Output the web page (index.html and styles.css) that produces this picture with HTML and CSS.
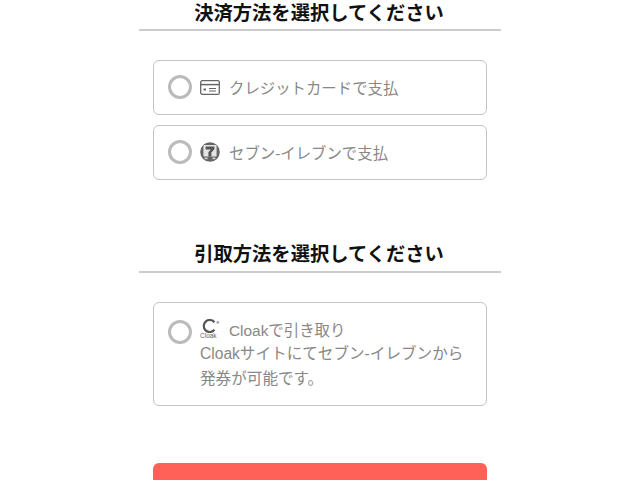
FILE: index.html
```html
<!DOCTYPE html>
<html lang="ja">
  <head>
    <meta charset="UTF-8" />
    <meta name="viewport" content="width=device-width, initial-scale=1.0" />
    <title>お支払い</title>
    <link rel="stylesheet" href="styles.css">
  </head>
  <body>
    <div class="container">
      <section class="section">
        <h2 class="section-title">決済方法を選択してください</h2>
        <div class="options">
          <label class="option">
            <span class="radio"></span>
            <svg class="icon" width="20" height="15" viewBox="0 0 20 15" fill="none" stroke="#666" stroke-width="1.3">
              <rect x="0.7" y="0.7" width="18.6" height="13.6" rx="1.6" />
              <path d="M1 4.6h18" stroke-width="1.5" />
              <path d="M3.5 9.5h2.5" stroke-width="2" />
              <path d="M9 8.5h7M9 11h7" stroke-width="1" />
            </svg>
            <span class="option-text">クレジットカードで支払</span>
          </label>
          <label class="option">
            <span class="radio"></span>
            <svg class="icon" width="20" height="20" viewBox="0 0 20 20">
              <circle cx="10" cy="10" r="9.8" fill="#666" />
              <rect x="3.4" y="3" width="13.2" height="11.6" rx="1" fill="#e4e4e4" />
              <path d="M5.6 4.6h8.8v2.6l-3 3.4v4H8.4v-4.4l2.4-2.8H5.6z" fill="#555" />
              <path d="M4.6 15.6h3v1.6h-3zM12.4 15.6h3v1.6h-3z" fill="#ccc" />
            </svg>
            <span class="option-text">セブン-イレブンで支払</span>
          </label>
        </div>
      </section>

      <section class="section section-pickup">
        <h2 class="section-title">引取方法を選択してください</h2>
        <div class="options">
          <label class="option option-top">
            <span class="radio radio-low"></span>
            <div class="option-body">
              <div class="cloak-row">
                <span class="cloak-logo">
                  <svg width="20" height="14" viewBox="0 0 20 14" fill="none">
                    <path d="M14.4 3.2A6 6 0 1 0 14.4 10.8" stroke="#555" stroke-width="2.2" />
                    <circle cx="17.8" cy="3.4" r="1.4" fill="#aaa" />
                  </svg>
                  <span class="cloak-small">Cloak</span>
                </span>
                <span class="option-text">Cloakで引き取り</span>
              </div>
              <p class="option-note">Cloakサイトにてセブン-イレブンから<br>発券が可能です。</p>
            </div>
          </label>
        </div>
      </section>

      <div class="btn-container">
        <button class="btn-next" type="submit"></button>
      </div>
    </div>
  </body>
</html>
```

FILE: styles.css
```css
html,
body {
  height: 100%;
  overflow: hidden;
}

body {
  margin: 0;
  background: #fff;
  font-family: "Liberation Sans", "Noto Sans CJK JP", sans-serif;
}

.container {
  width: 362px;
  margin: 0 auto;
}

.section-title {
  margin: 0;
  height: 29px;
  padding-right: 2px;
  box-sizing: content-box;
  line-height: 27px;
  font-size: 19.3px;
  font-weight: bold;
  text-align: center;
  color: #111;
  border-bottom: 2px solid #ccc;
  width: 360px;
}

.section-pickup {
  margin-top: 61px;
}

.section-pickup .section-title {
  height: 30px;
  line-height: 27px;
}

.options {
  display: flex;
  flex-direction: column;
  gap: 10px;
  margin: 29px 14px 0;
}

.option {
  display: flex;
  align-items: center;
  height: 55px;
  padding: 0 14px 1px;
  box-sizing: border-box;
  border: 1px solid #c4c4c4;
  border-radius: 6px;
  color: #888;
  font-size: 15.4px;
}

.option-top {
  height: 104px;
}

.radio {
  flex: none;
  width: 24px;
  height: 24px;
  box-sizing: border-box;
  margin-right: 8px;
  border: 3px solid #bbb;
  border-radius: 50%;
}

.radio-low {
  align-self: flex-start;
  margin-top: 17px;
}

.icon {
  flex: none;
  margin-right: 10px;
}

.option-text {
  padding-bottom: 1px;
  margin-left: -1px;
}

.option-body {
  flex: 1;
  margin-top: 1px;
}

.cloak-row {
  display: flex;
  align-items: center;
  height: 25px;
}

.cloak-logo {
  display: flex;
  flex-direction: column;
  width: 30px;
  line-height: 1;
}

.cloak-small {
  font-size: 6.5px;
  margin-top: 0;
  color: #666;
}

.option-note {
  margin: 0;
  font-size: 15.6px;
  line-height: 24.5px;
}

.btn-container {
  margin: 57px 14px 0;
}

.btn-next {
  display: block;
  width: 100%;
  height: 60px;
  border: none;
  border-radius: 6px;
  background: #ff6159;
}
```
